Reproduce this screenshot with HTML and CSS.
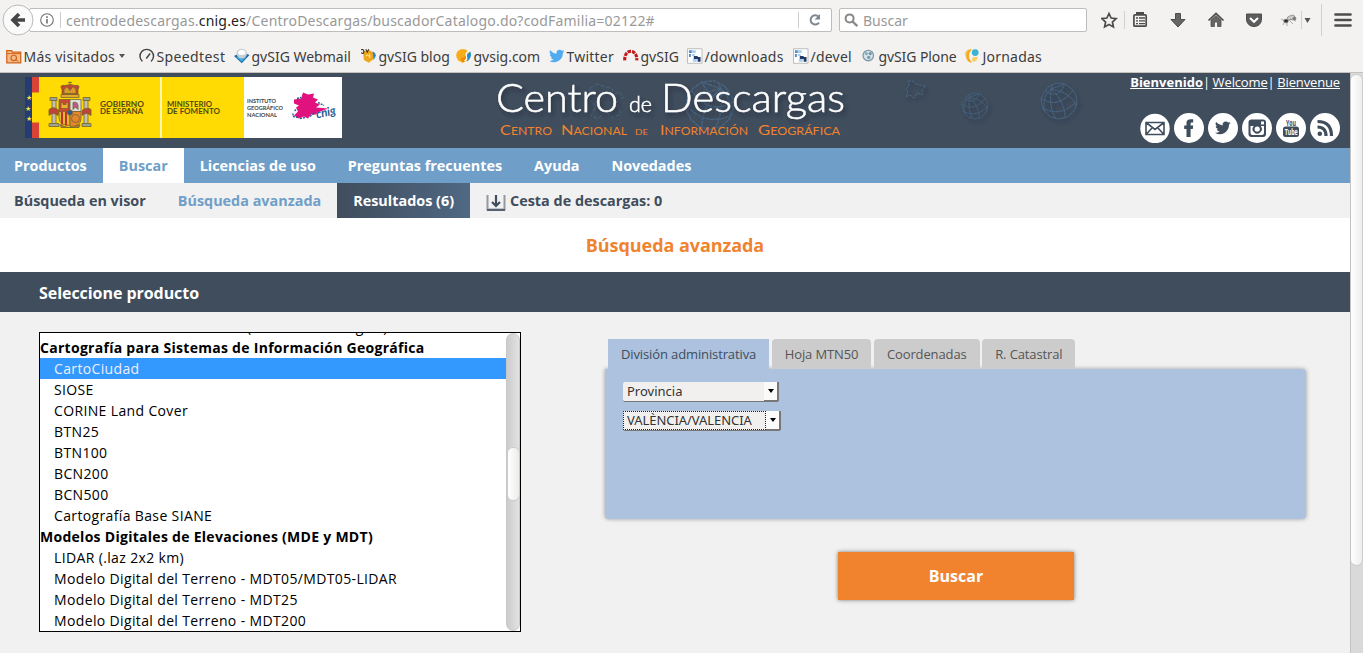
FILE: index.html
```
<!DOCTYPE html>
<html lang="es">
<head>
<meta charset="utf-8">
<title>Centro de Descargas</title>
<link rel="stylesheet" href="styles.css">
</head>
<body>
<div class="browser">
  <div class="toolbar">
    <button class="back"><svg width="32" height="32" viewBox="0 0 32 32"><circle cx="16" cy="16" r="15" fill="#fafafa" stroke="#bcbab8"/><path d="M17 10L11 16l6 6M11.5 16H23" fill="none" stroke="#454545" stroke-width="3.6"/></svg></button>
    <div class="urlbar">
      <svg class="info" width="14" height="14" viewBox="0 0 14 14"><circle cx="7" cy="7" r="6.3" fill="none" stroke="#707070" stroke-width="1.1"/><path d="M7 6v4.5M7 3.3v1.6" stroke="#707070" stroke-width="1.6"/></svg>
      <i class="vline"></i>
      <span class="url">centrodedescargas.<b>cnig.es</b>/CentroDescargas/buscadorCatalogo.do?codFamilia=02122#</span>
      <i class="vline"></i>
      <svg class="reload" width="14" height="14" viewBox="0 0 14 14"><path d="M11 9.6A4.6 4.6 0 1 1 10.4 3.6" fill="none" stroke="#7c8894" stroke-width="2"/><path d="M12 1v5.6H6.6z" fill="#7c8894"/></svg>
    </div>
    <div class="search"><svg width="15" height="15" viewBox="0 0 15 15"><circle cx="5.6" cy="5.4" r="4" fill="none" stroke="#888" stroke-width="2"/><path d="M8.5 8.5L13.4 13.2" stroke="#888" stroke-width="2.4"/></svg><span>Buscar</span></div>
    <svg class="tools" width="262" height="36" viewBox="1101 2 262 36" fill="none" stroke="#4c4c4c">
      <path d="M1109 13.5l2.1 4.5 5 .6-3.7 3.4 1 4.9-4.4-2.5-4.4 2.5 1-4.9-3.7-3.4 5-.6z" stroke-width="1.7"/>
      <path d="M1124.500 11v18M1301.500 11v18M1321.500 4v32" stroke="#d2d0ce"/>
      <rect x="1133.900" y="14.800" width="12.300" height="11.400" rx="1" stroke-width="1.700"/><path d="M1137 14.500v-1.500h6v1.500" stroke-width="2"/><path d="M1136 18h2M1139 18h6M1136 20.800h2M1139 20.800h6M1136 23.600h2M1139 23.600h6" stroke-width="1.300"/>
      <path d="M1175.500 13.500h5v6h4.500l-7 7.500-7-7.500h4.500z" fill="#666" stroke-width="1"/>
      <path d="M1208.500 20.500l7.500-7 7.500 7" stroke-width="1.700"/><path d="M1211 20l5-4.500 5 4.500v6.500h-3.400V22h-3.200v4.500H1211z" fill="#666" stroke-width=".8"/>
      <path d="M1246.500 14h15v5c0 10-15 10-15 0z" fill="#5c5c5c"/><path d="M1250 18l4 3.800 4-3.800" stroke="#fff" stroke-width="2"/>
      <g stroke="#777" stroke-width=".6"><ellipse cx="1286" cy="21" rx="2.300" ry="1.800" fill="#222"/><ellipse cx="1291" cy="17.500" rx="4" ry="2" fill="#ccc" transform="rotate(-20 1291 17.500)"/><circle cx="1294.500" cy="18.500" r="1.500" fill="#777"/><path d="M1281 19l4 2-2 4M1287 21l0 5M1289 20l4 4M1290 19l6 2"/></g>
      <path d="M1304.500 18h6l-3 5z" fill="#555" stroke="none"/>
      <path d="M1335.500 14.500h15M1335.500 20h15M1335.500 25.500h15" stroke-linecap="round" stroke-width="2.700"/>
    </svg>
  </div>
  <div class="bookmarks">
    <a><svg viewBox="0 0 16 16"><path d="M.8 2.500h5l1 1.500h8.400v11H.8z" fill="#f6b988" stroke="#cf6419" stroke-width="1.300"/><path d="M1 5.500h14" stroke="#cf6419"/><circle cx="8" cy="10" r="2.800" fill="none" stroke="#cf6419" stroke-width="1.200"/><path d="M10 12l3 2" stroke="#cf6419"/></svg><span class="wide">Más visitados</span><i class="caret"></i></a>
    <a><svg viewBox="0 0 16 16"><path d="M3.500 13.500A7 7 0 1 1 12.500 13.500M7.500 10.500l4-5" fill="none" stroke="#444" stroke-width="1.500"/></svg><span class="wider">Speedtest</span></a>
    <a><svg viewBox="0 0 16 16"><path d="M0 8l8 7.500L16 7l-5-2-7 1z" fill="#186aa5"/><path d="M2 9l6 5 5-5z" fill="#43a9dd"/><ellipse cx="8" cy="5.500" rx="5.500" ry="5" fill="#c9ced3"/><path d="M4 4q4-5 8 0 0 3-4 3T4 4z" fill="#fff"/></svg><span>gvSIG Webmail</span></a>
    <a><svg viewBox="0 0 16 16"><path d="M2 3l7-1 4 3v6l-5 4-5-3z" fill="#eda51c"/><path d="M0 1.500q3-1 3 2t-3 1M5 1l1.500 3L8 1" fill="none" stroke="#3a2d12" stroke-width="1.100"/><path d="M5 8q2-2 3 0M9 6v4" fill="none" stroke="#fff2c0"/><path d="M12 3q6 3 1 9z" fill="#2a88c8"/></svg><span>gvSIG blog</span></a>
    <a><svg viewBox="0 0 16 16"><circle cx="7" cy="7.500" r="6.800" fill="#f7ad1b"/><path d="M12 2q-1 8-7 8l1 5q9-2 6-13z" fill="#f08b00"/><path d="M14 2.500q-5 3-3 6 1 2-2 5" fill="none" stroke="#fff" stroke-width="1.500"/><path d="M14.500 3q3 6-3.500 11 2-5 0-6z" fill="#208ccc"/></svg><span>gvsig.com</span></a>
    <a><svg viewBox="0 0 24 24"><path d="M24 4.600a10 10 0 0 1-2.800.8 5 5 0 0 0 2.100-2.700 10 10 0 0 1-3.100 1.200A4.900 4.900 0 0 0 11.800 8.400 14 14 0 0 1 1.700 3.200 4.900 4.900 0 0 0 3.200 9.700 5 5 0 0 1 1 9.100a4.900 4.900 0 0 0 3.900 4.900 5 5 0 0 1-2.200.1 4.900 4.900 0 0 0 4.600 3.400A10 10 0 0 1 0 19.500 14 14 0 0 0 21.500 7.100 10 10 0 0 0 24 4.600z" fill="#50abf1"/></svg><span class="wide">Twitter</span></a>
    <a><svg viewBox="0 0 16 16"><path d="M1.800 12.500C1 0 15 0 14.200 12.500" fill="none" stroke="#c51a1a" stroke-width="3.200" stroke-dasharray="3.600 1"/></svg><span>gvSIG</span></a>
    <a><svg viewBox="0 0 16 16"><path d="M.5.500h15v15H.5z" fill="#fff" stroke="#bbb"/><path d="M2 2h3v3H2zM2 6h2v3H2z" fill="#5a8cc4"/><path d="M5 2h4v3H5zM5 6h3v2H5zM6 11h4v3H6z" fill="#a9cdec"/><path d="M11 9h3v5h-3zM7 8h4v3H7z" fill="#233b66"/></svg><span class="wide">/downloads</span></a>
    <a><svg viewBox="0 0 16 16"><path d="M.5.500h15v15H.5z" fill="#fff" stroke="#bbb"/><path d="M2 2h3v3H2zM2 6h2v3H2z" fill="#5a8cc4"/><path d="M5 2h4v3H5zM5 6h3v2H5zM6 11h4v3H6z" fill="#a9cdec"/><path d="M11 9h3v5h-3zM7 8h4v3H7z" fill="#233b66"/></svg><span class="wide">/devel</span></a>
    <a><svg viewBox="0 0 16 16"><circle cx="7.500" cy="7.500" r="5.400" fill="#d5e5ed" stroke="#7d98a6" stroke-width="1.300"/><circle cx="5.500" cy="5.500" r="1.600" fill="#8ba9b7"/><circle cx="9.500" cy="5.500" r="1.600" fill="#6f90a0"/><circle cx="8" cy="9.500" r="1.700" fill="#7799a8"/></svg><span class="tight">gvSIG Plone</span></a>
    <a><svg viewBox="0 0 16 16"><path d="M7 1Q-1 1 .5 8T7 15Q0 8 7 1z" fill="#f8bc41"/><path d="M7 1q-6 7 0 14-5-1-5-7t5-7z" fill="#f5a524"/><circle cx="10.500" cy="4.500" r="3.500" fill="#3ab3d4"/><path d="M8 9h5q0 4-4 5l-2-1z" fill="#f9cd61"/></svg><span class="wide">Jornadas</span></a>
  </div>
</div>
<div class="viewport">
<main class="page">
  <header class="banner">
    <svg class="logo" width="317" height="61" viewBox="25 76.500 317 61" font-family="Lato, sans-serif">
      <path fill="#243c72" d="M25 76.500h7v61h-7z"/><path fill="#da4437" d="M32 76.500h7v61h-7z"/><path fill="#ffda03" d="M32 92h7v30h-7zM39 76.500h205v61H39z"/><path fill="#fff6b0" d="M160 76.500h2v61h-2z"/><path fill="#fff" d="M244 76.500h98v61h-98z"/>
      <g fill="#f9e33b" font-size="7" font-family="DejaVu Sans"><text x="26" y="99">★</text><text x="25" y="110">★</text><text x="26" y="120">★</text></g>
      <g stroke="#76652b" stroke-width=".8">
        <path d="M62 95v-6q-3-5 3-4l5-1 5 1q6-1 3 4v6z" fill="#c74236"/><path d="M61 94h18v3H61zM70 84v-3M68 82h4" fill="#e5a929"/><path d="M64 89l3-3 3 4 3-4 3 3v4H64z" fill="#d99b28"/>
        <path d="M59 99h11v12H59z" fill="#cf4435"/><path d="M70 99h11v12H70z" fill="#dedede"/><path d="M59 111h11v14q-11 0-11-8z" fill="#e3b730"/><path d="M70 111h11v7q0 8-11 8z" fill="#e5852c"/>
        <path d="M61 107v-5h2v2h3v-2h2v6h-7z" fill="#e6b035"/><path d="M73 102q6-2 5 7-3-4-5 0z" fill="#ba5a90"/><path d="M62 111v13M66 111v14" stroke="#bd3329" stroke-width="2"/><circle cx="75.500" cy="118" r="4" fill="none"/><circle cx="70" cy="112" r="2.600" fill="#315992"/>
        <path d="M52 100h4v23h-4zM84 100h4v23h-4z" fill="#c5bfb2"/><path d="M50 97h7v3h-7zM83 97h7v3h-7zM49 123h10v3H49zM82 123h9v3h-9z" fill="#9da493"/><path d="M49 109q5-4 10 1l-1 5q-5-4-9 0zM82 110q5-4 9-1v6q-5-4-9 0z" fill="#bf4434"/><path d="M60 124q10 6 20 0l-1 3H61z" fill="#ab7b31"/>
      </g>
      <g font-size="8" font-weight="700" fill="#504817"><text x="100" y="106" textLength="44" lengthAdjust="spacingAndGlyphs">GOBIERNO</text><text x="100" y="113.500" textLength="43" lengthAdjust="spacingAndGlyphs">DE ESPAÑA</text><text x="167" y="106" textLength="45" lengthAdjust="spacingAndGlyphs">MINISTERIO</text><text x="167" y="113.500" textLength="53" lengthAdjust="spacingAndGlyphs">DE FOMENTO</text></g>
      <g font-size="6" font-weight="700" fill="#444"><text x="247" y="102.500" textLength="29" lengthAdjust="spacingAndGlyphs">INSTITUTO</text><text x="247" y="109.500" textLength="36" lengthAdjust="spacingAndGlyphs">GEOGRÁFICO</text><text x="247" y="116.500" textLength="30" lengthAdjust="spacingAndGlyphs">NACIONAL</text></g>
      <path d="M294 99l7-1 2-6 5 2 6-1-1 4 5 2-3 3 5 2-4 3 12 1-10 4-2 2-5 0-3 4-4-2-5 2-5-3 4-4-2-4 3-2-5-2z" fill="#e1127e"/><path d="M293 113l0 3 5 1M300 118l6-1M310 116l5-4M296 109l-2 2M318 102l6 3M297 98l4-1" fill="none" stroke="#285b91" stroke-width="1.400" stroke-dasharray="2 1"/>
      <text x="317" y="118" font-size="12" font-style="italic" font-weight="700" fill="#285b91" textLength="20" lengthAdjust="spacingAndGlyphs" transform="rotate(-13 317 118)">cnig</text>
    </svg>
    <svg class="title-art" width="620" height="75" viewBox="480 73 620 75" font-family="Lato, sans-serif">
      <defs>
        <filter id="s" x="-10%" y="-30%" width="120%" height="170%"><feDropShadow dx="2" dy="3" stdDeviation="2" flood-color="#1d2530" flood-opacity=".65"/></filter>
        <g id="globe" fill="none" stroke="#4d7093" stroke-width="1" stroke-dasharray="3 .5"><path d="M-11-14L-3-18 6-17 13-12 17-6 18 3 14 11 8 16 0 18-8 16-14 11-17 4-18-3z"/><path d="M-8-12Q-18-3-14 11M-8-12Q-10 8-3 18M-8-12Q6 0 6 17M-8-12Q14-8 17 6M-8-12L-6-17M-8-12L6-17M-14-11Q-2 0 6-17M-18-3Q-1 9 14-11M-17 7Q2 17 18 0"/></g>
      </defs>
      <g opacity=".65"><use href="#globe" transform="translate(710 105) scale(-1.350 1.350)"/><path d="M590 88l7-4 9 3 7 2-2 7 8-4 5 5-8 5 5 12-10 4-5-7-8 8-7-3 5-10-7-7z" fill="none" stroke="#4d7093" stroke-dasharray="4 2"/></g>
      <g filter="url(#s)"><g opacity=".7"><use href="#globe" transform="translate(975 106) scale(.72)"/><use href="#globe" transform="translate(1059 101)"/><path d="M908 81h5l3 3 4 1 6 1-4 4v5l-5-2-3 5-4-3-4 2 2-5-2-3 3-3z" fill="none" stroke="#4d7093" stroke-dasharray="3 1"/></g></g>
      <g fill="#fff" stroke="#fff" stroke-width=".5" font-weight="300" filter="url(#s)" font-size="40"><text x="496" y="112" textLength="122" lengthAdjust="spacingAndGlyphs">Centro</text><text x="629" y="112" font-size="21" textLength="23" lengthAdjust="spacingAndGlyphs">de</text><text x="661" y="112" textLength="184" lengthAdjust="spacingAndGlyphs">Descargas</text></g>
      <g fill="#f0832e" font-size="10.500"><text x="500" y="135" textLength="52" lengthAdjust="spacingAndGlyphs"><tspan font-size="14">C</tspan>ENTRO</text><text x="561" y="135" textLength="66" lengthAdjust="spacingAndGlyphs"><tspan font-size="14">N</tspan>ACIONAL</text><text x="635" y="135" font-size="8" textLength="13" lengthAdjust="spacingAndGlyphs">DE</text><text x="660" y="135" textLength="88" lengthAdjust="spacingAndGlyphs"><tspan font-size="14">I</tspan>NFORMACIÓN</text><text x="758" y="135" textLength="82" lengthAdjust="spacingAndGlyphs"><tspan font-size="14">G</tspan>EOGRÁFICA</text></g>
    </svg>
    <div class="corner">
      <div class="langs"><a class="cur">Bienvenido</a>|<a>Welcome</a>|<a>Bienvenue</a></div>
      <div class="social">
        <svg viewBox="0 0 30 30"><circle cx="15" cy="15.500" r="14.700"/><path class="ln" d="M6 9.500h18v12H6zM6 9.500l9 7 9-7M6 21.500l6.500-7M24 21.500l-6.500-7"/></svg>
        <svg viewBox="0 0 30 30"><circle cx="15" cy="15" r="15"/><path class="dk" d="M12.500 24v-8h-2.300v-3.500h2.300V10c0-3.300 2-4.300 6.700-3.700v3.200c-2-.1-2.600.1-2.600 1.500v1.500h2.600l-.4 3.500h-2.200v8z"/></svg>
        <svg viewBox="0 0 30 30"><circle cx="15" cy="15" r="15"/><path class="dk" transform="translate(7 7) scale(.65)" d="M24 4.600a10 10 0 0 1-2.800.8 5 5 0 0 0 2.100-2.700 10 10 0 0 1-3.100 1.200A4.900 4.900 0 0 0 11.800 8.400 14 14 0 0 1 1.700 3.200 4.900 4.900 0 0 0 3.200 9.700 5 5 0 0 1 1 9.100a4.900 4.900 0 0 0 3.900 4.900 5 5 0 0 1-2.200.1 4.900 4.900 0 0 0 4.600 3.400A10 10 0 0 1 0 19.500 14 14 0 0 0 21.500 7.100 10 10 0 0 0 24 4.600z"/></svg>
        <svg viewBox="0 0 30 30"><circle cx="15" cy="15" r="15"/><rect class="dk" x="6.500" y="6.500" width="17.500" height="17.500" rx="3"/><path d="M8.500 13h3.200a4.600 4.600 0 1 0 7 0H22v7q0 2-2 2h-9.500q-2 0-2-2zM19 8.500h3v3h-3z"/><circle cx="15.200" cy="16" r="2.600"/></svg>
        <svg viewBox="0 0 30 30"><circle cx="15" cy="15" r="15"/><rect class="dk" x="7" y="13.500" width="16" height="10.500" rx="2.500"/><text class="dk" x="10" y="12.500" font-size="8.500" font-weight="700" textLength="10" lengthAdjust="spacingAndGlyphs">You</text><text x="8.700" y="22" font-size="8.500" font-weight="700" textLength="13" lengthAdjust="spacingAndGlyphs">Tube</text></svg>
        <svg viewBox="0 0 30 30"><circle cx="15" cy="15" r="15"/><circle class="dk" cx="9.800" cy="20.800" r="2.300"/><path class="ln rss" d="M7.500 14q8.500 0 8.500 9M7.500 8.500q14 0 14 14.500"/></svg>
      </div>
    </div>
  </header>
  <nav class="menu"><a>Productos</a><a class="on">Buscar</a><a>Licencias de uso</a><a>Preguntas frecuentes</a><a>Ayuda</a><a>Novedades</a></nav>
  <nav class="menu sub"><a>Búsqueda en visor</a><a class="lit">Búsqueda avanzada</a><a class="res">Resultados (6)</a><a class="cart"><svg width="20" height="16" viewBox="0 0 20 16"><path d="M1.500 0v14.500h17V0" fill="none" stroke="#9299a2" stroke-width="2"/><path d="M1 15h18" stroke="#56616f" stroke-width="2"/><path d="M10 0v10M6 7l4 4 4-4" fill="none" stroke="#404d5d" stroke-width="2.200"/></svg>Cesta de descargas: 0</a></nav>
  <h1>Búsqueda avanzada</h1>
  <h2>Seleccione producto</h2>
  <section class="content">
    <div class="listbox">
      <div class="options">
        <p class="cut">Ortofotos históricas u otras (del vuelo analógico)</p>
        <p class="group">Cartografía para Sistemas de Información Geográfica</p>
        <p class="sel">CartoCiudad</p><p>SIOSE</p><p>CORINE Land Cover</p><p>BTN25</p><p>BTN100</p><p>BCN200</p><p>BCN500</p><p>Cartografía Base SIANE</p>
        <p class="group">Modelos Digitales de Elevaciones (MDE y MDT)</p>
        <p>LIDAR (.laz 2x2 km)</p><p>Modelo Digital del Terreno - MDT05/MDT05-LIDAR</p><p>Modelo Digital del Terreno - MDT25</p><p>Modelo Digital del Terreno - MDT200</p>
      </div>
      <div class="track"><div class="thumb"></div></div>
    </div>
    <div class="filters">
      <div class="tabs"><a class="active">División administrativa</a><a>Hoja MTN50</a><a>Coordenadas</a><a>R. Catastral</a></div>
      <div class="panel">
        <div class="combo"><span>Provincia</span><i></i></div>
        <div class="combo focus"><span>VALÈNCIA/VALENCIA</span><i></i></div>
      </div>
      <button class="go">Buscar</button>
    </div>
  </section>
</main>
<div class="scroll"><div class="scroll-thumb"></div></div>
</div>
</body>
</html>
```
FILE: styles.css
```
* { box-sizing: border-box; }
body { margin: 0; height: 653px; overflow: hidden; font-family: "Open Sans", sans-serif; background: #f2f1f0; }
svg { display: block; flex: none; }
button { border: 0; padding: 0; background: none; }

.browser { height: 73px; background: #f3f2f1; border-bottom: 1px solid #c4c1be; font-family: "Noto Sans", sans-serif; }
.toolbar { display: flex; align-items: center; height: 40px; padding-left: 2px; }
.back { z-index: 1; }
.urlbar { display: flex; align-items: center; width: 803px; height: 24px; margin-left: -5px; padding-left: 11px; background: #fff; border: 1px solid #bfbdbb; border-radius: 2px; font-size: 14px; color: #999; }
.url { width: 726px; margin-left: 5px; white-space: nowrap; letter-spacing: .2px; }
.url b { font-weight: 400; color: #222; }
.vline { width: 1px; height: 16px; margin-left: 6px; background: #ccc; }
.info { margin: 0 0 0 -1px; }
.reload { margin-left: 9px; }
.search { display: flex; align-items: center; gap: 4px; width: 248px; height: 24px; margin: 0 14px 0 7px; padding-left: 4px; background: #fff; border: 1px solid #bfbdbb; border-radius: 2px; font-size: 14px; color: #999; }

.bookmarks { display: grid; grid-template-columns: 133px 95px 127px 95px 93px 74px 64px 106px 68px 104px 90px; padding-left: 6px; height: 32px; font-size: 14px; color: #3c3c3c; }
.bookmarks a { display: flex; align-items: center; gap: 2px; white-space: nowrap; }
.bookmarks svg { width: 15.5px; height: 16px; }
.bookmarks .wide { letter-spacing: .22px; }
.bookmarks .wider { letter-spacing: .38px; }
.bookmarks .tight { letter-spacing: -.1px; }
.caret { margin-left: 2px; border: 3.5px solid transparent; border-top: 4.5px solid #555; border-bottom: 0; }

.viewport { display: flex; height: 580px; }
.page { width: 1350px; background: #f1f1f1; }
.scroll { width: 13px; border-left: 1px solid #c3c2c0; background: #d9d9d9; }
.scroll-thumb { height: 492px; margin-top: 1px; border-radius: 6px; border: 1px solid #ccc; border-left: 0; background: linear-gradient(90deg, #fff, #eee); }

.banner { display: flex; height: 75px; background: #404d5d; }
.logo { margin: 3.5px 0 0 25px; }
.title-art { margin-left: 138px; }
.corner { width: 240px; margin-left: auto; padding-right: 10px; }
.langs { display: flex; justify-content: flex-end; height: 18px; line-height: 18px; font-size: 13px; color: #fff; white-space: nowrap; }
.langs a { text-decoration: underline; margin-left: 2.5px; letter-spacing: -.14px; }
.langs .cur { font-weight: 700; margin: 0; letter-spacing: 0; }
.social { display: flex; justify-content: flex-end; gap: 4px; margin-top: 22px; }
.social svg { width: 30px; height: 30px; fill: #fff; }
.social .dk { fill: #404d5d; }
.social .ln { fill: none; stroke: #404d5d; stroke-width: 1.6; }
.social .rss { stroke-width: 3.2; }

.menu { display: flex; height: 35px; line-height: 35px; background: #6f9fc8; color: #fff; font-size: 14.4px; font-weight: 700; white-space: nowrap; }
.menu a { padding: 0 16px; }
.menu a:first-child { padding-left: 14px; }
.menu .on { background: #fff; color: #6f9fc8; }
.sub { background: #f1f1f1; color: #404d5d; }
.sub .lit { color: #6f9fc8; }
.sub .res { color: #fff; background: linear-gradient(90deg, #404d5d, #4f6883); }
.cart { display: flex; align-items: center; gap: 4px; }
.cart svg { margin-top: 4px; }
h1 { margin: 0; height: 54px; line-height: 54px; background: #fff; color: #f0832e; font-size: 18px; letter-spacing: -.06px; text-align: center; }
h2 { margin: 0; height: 40px; line-height: 42px; padding-left: 39px; background: #404d5d; color: #fff; font-size: 16px; letter-spacing: -.05px; }
.content { display: flex; padding: 20px 0 0 39px; }

.listbox { display: flex; width: 482px; height: 300px; border: 1px solid #000; background: #fff; overflow: hidden; }
.options { width: 466px; font-size: 14px; line-height: 21px; letter-spacing: .36px; color: #000; white-space: nowrap; }
.options p { margin: 0; height: 21px; padding-left: 14px; }
.options .group { padding-left: 0; font-weight: 700; letter-spacing: .28px; }
.options .cut { margin-top: -17px; }
.options .sel { background: #3399ff; color: #eef; }
.track { width: 14px; border-radius: 7px; border: 1px solid #c8c8c8; background: linear-gradient(90deg, #ccc, #e2e2e2); }
.thumb { height: 54px; margin: 113px -1px 0 0; border-radius: 6px; border: 1px solid #ccc; background: linear-gradient(90deg, #fff, #ececea); }

.filters { width: 701px; margin: 7px 0 0 84px; }
.tabs { display: flex; gap: 2.6px; padding-left: 3px; font-size: 13px; line-height: 30px; height: 30px; letter-spacing: -.12px; color: #555; white-space: nowrap; }
.tabs a { padding: 0 13px; background: #ccc; border-radius: 4px 4px 0 0; }
.tabs .active { position: relative; z-index: 1; background: #adc2de; color: #404d5d; border-radius: 0; }
.panel { display: flex; flex-direction: column; align-items: flex-start; gap: 9px; height: 150px; padding: 13px 0 0 18px; background: #adc2de; border-radius: 0 4px 4px 4px; box-shadow: 0 0 4px #999; }
.combo { display: flex; width: 156px; height: 20px; line-height: 19px; background: #f2f0ee; border-bottom: 1.500px solid #777; border-radius: 2px; font-family: "Noto Sans", sans-serif; font-size: 13px; color: #333; }
.combo span { flex: 1; padding-left: 4px; white-space: nowrap; }
.combo i { width: 15px; display: grid; place-items: center; background: #fafafa; border-right: 2px solid #777; border-bottom: 1px solid #777; }
.combo i::before { content: ""; border: 3.5px solid transparent; border-top: 4px solid #000; border-bottom: 0; }
.combo.focus { width: 158px; }
.focus span { outline: 1px dotted #222; outline-offset: -1px; letter-spacing: -.05px; }
.go { display: block; width: 236px; height: 48px; margin: 33px 0 0 233px; background: #f1832e; color: #fff; font: 700 16px "Open Sans", sans-serif; box-shadow: 0 0 4px #777; }
```
